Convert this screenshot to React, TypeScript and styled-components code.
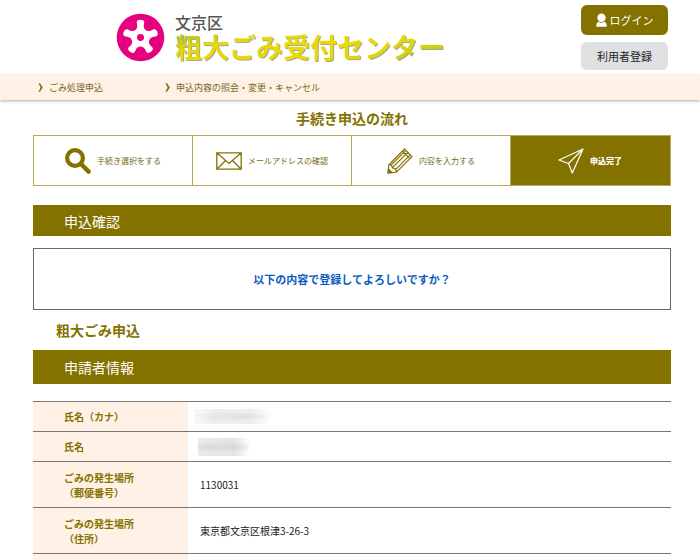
import React from "react";
import styled, { createGlobalStyle, css } from "styled-components";

const olive = "#847200";
const cream = "#fff1e5";

const Global = createGlobalStyle`
  * { box-sizing: border-box; }
  body {
    margin: 0;
    background: #fff;
    color: #222;
    font-family: "Noto Sans CJK JP", "Noto Sans", sans-serif;
    font-size: 10px;
    overflow-x: hidden;
  }
  h1, h2, h3, p, ol { margin: 0; padding: 0; }
`;

const Header = styled.header`
  display: flex;
  justify-content: space-between;
  padding: 5px 32px 5px 116px;
`;

const Brand = styled.a`
  display: flex;
  align-items: center;
  gap: 10px;
  text-decoration: none;
`;

const BrandText = styled.h1`
  display: flex;
  flex-direction: column;
  padding-bottom: 2px;
  color: #555;
`;

const Ward = styled.span`
  font-size: 16px;
  font-weight: 500;
  line-height: 20px;
`;

const CenterName = styled.span`
  font-size: 27px;
  font-weight: 700;
  line-height: 30px;
  white-space: nowrap;
  color: transparent;
  background: linear-gradient(165deg, #a3c41c 0, #e2d70e 20%, #ecd905 55%, #ddd60c 75%, #a9c31a);
  background-clip: text;
  filter: drop-shadow(1px 1px 0 #aaa690);
`;

const Account = styled.div`
  display: flex;
  flex-direction: column;
  gap: 7px;
`;

const AccountButton = styled.button<{ $primary?: boolean }>`
  display: flex;
  align-items: center;
  justify-content: center;
  gap: 3px;
  width: 87px;
  height: ${(p) => (p.$primary ? 30 : 28)}px;
  padding: 0;
  border: 0;
  border-radius: 6px;
  background: ${(p) => (p.$primary ? olive : "#dfe0e2")};
  color: ${(p) => (p.$primary ? "#fff" : "#222")};
  font: inherit;
  font-size: 11px;
`;

const Nav = styled.nav`
  display: flex;
  align-items: center;
  gap: 62px;
  height: 25px;
  padding: 0 38px;
  background: ${cream};
  box-shadow: 0 1px 3px #aaa;
`;

const NavLink = styled.a`
  display: flex;
  align-items: center;
  gap: 6px;
  color: #75681a;
  font-size: 9px;
  line-height: 12px;
  text-decoration: none;
`;

const Main = styled.main`
  padding: 8px 29px 0 33px;
`;

const FlowTitle = styled.h2`
  color: ${olive};
  font-size: 14px;
  line-height: 20px;
  text-align: center;
`;

const Steps = styled.ol`
  display: grid;
  grid-template-columns: repeat(4, 1fr);
  height: 51px;
  margin-top: 7px;
  border: 1px solid #b9ab55;
  list-style: none;
`;

const Step = styled.li<{ $current?: boolean }>`
  display: flex;
  align-items: center;
  justify-content: center;
  gap: 6px;
  border-right: 1px solid ${(p) => (p.$current ? olive : "#b9ab55")};
  color: #75681a;
  font-size: 8px;
  ${(p) =>
    p.$current &&
    css`
      background: ${olive};
      color: #fff;
      font-weight: 900;
    `}
`;

const Bar = styled.h2<{ $tall?: boolean }>`
  display: flex;
  align-items: center;
  height: ${(p) => (p.$tall ? 34 : 31)}px;
  padding-left: 31px;
  background: ${olive};
  color: #fff;
  font-size: 14px;
  font-weight: 400;
`;

const Confirm = styled.p`
  margin-top: 12px;
  padding: 22px 0;
  border: 1px solid #666;
  color: #0b5cc2;
  font-size: 11px;
  font-weight: 700;
  line-height: 16px;
  text-align: center;
`;

const Section = styled.section`
  margin-top: 19px;
`;

const FormName = styled.h2`
  margin: 10px 0;
  padding-left: 23px;
  color: ${olive};
  font-size: 14px;
  line-height: 20px;
`;

const Info = styled.table`
  width: 100%;
  margin-top: 17px;
  border-collapse: collapse;
  line-height: 15px;
`;

const Row = styled.tr<{ $tall?: boolean }>`
  height: ${(p) => (p.$tall ? 46 : 30)}px;
  border-top: 1px solid #777;
`;

const Label = styled.th`
  width: 155px;
  padding: 0 0 0 31px;
  background: ${cream};
  color: ${olive};
  font-weight: 700;
  text-align: left;
`;

const Value = styled.td`
  padding: 0 12px;
`;

const Redacted = styled.span<{ $long?: boolean }>`
  display: block;
  width: ${(p) => (p.$long ? 78 : 52)}px;
  height: ${(p) => (p.$long ? 15 : 18)}px;
  margin-left: ${(p) => (p.$long ? -6 : -2)}px;
  background: ${(p) =>
    p.$long
      ? "radial-gradient(ellipse at 38% 50%, #e1e2e2 0, transparent 45%), radial-gradient(ellipse at 64% 50%, #dfe0e0 0, transparent 40%), linear-gradient(90deg, #f8f8f8, #eee 25%, #eee 75%, #fff)"
      : "radial-gradient(ellipse at 25% 50%, #d8d9d9 0, transparent 45%), radial-gradient(ellipse at 66% 50%, #d7d8d8 0, transparent 40%), linear-gradient(90deg, #ebebeb, #e4e4e4 70%, #fff)"};
`;

const Emblem = () => (
  <svg width="49" height="49" viewBox="0 0 48 48" aria-hidden="true">
    <circle cx="24" cy="24" r="23.3" fill="#e5007f" />
    <g fill="#fff">
      {[0, 72, 144, 216, 288].map((a) => (
        <path
          key={a}
          transform={`rotate(${a} 24 24)`}
          d="M17 24L18.2 17.5Q21 15.5 20.8 12L20.3 9.4Q20.3 6.6 24 6.6Q27.7 6.6 27.7 9.4L27.2 12Q27 15.5 29.8 17.5L31 24Z"
        />
      ))}
    </g>
    <circle cx="24" cy="24" r="3.4" fill="#e5007f" />
  </svg>
);

const Person = () => (
  <svg width="11" height="14" viewBox="0 0 11 14" fill="#fff" aria-hidden="true">
    <circle cx="5.5" cy="4.7" r="4.2" />
    <path d="M.3 13.8V12Q.3 9.5 2.6 8.7Q5.5 10.6 8.4 8.7Q10.7 9.5 10.7 12V13.8Z" />
  </svg>
);

const Chevron = () => (
  <svg width="5" height="9" viewBox="0 0 5 9" fill={olive} aria-hidden="true">
    <path d="M.5 .3H2L4.8 4.5L2 8.7H.5L2.6 4.5Z" />
  </svg>
);

const Magnifier = () => (
  <svg width="26" height="26" viewBox="0 0 26 26" fill="none" stroke={olive} aria-hidden="true">
    <circle cx="10" cy="10" r="7.9" strokeWidth="4.2" />
    <path d="M16 16L23.6 23.6" strokeWidth="4.4" strokeLinecap="round" />
  </svg>
);

const Envelope = () => (
  <svg width="26" height="18" viewBox="0 0 26 18" fill="none" stroke={olive} strokeWidth="1.3" aria-hidden="true">
    <path d="M.8 .8H25.2V17.2H.8ZM1 1L13 11.5L25 1M1 17L9.6 8.5M25 17L16.4 8.5" />
  </svg>
);

const Pencil = () => (
  <svg width="26" height="26" viewBox="0 0 26 26" fill="none" stroke={olive} strokeWidth="1.2" strokeLinejoin="round" aria-hidden="true">
    <path d="M1 25L1.8 17L17.5 1L25 8.7L9.5 24.2ZM1.8 17Q5 16.2 5.3 19.8Q9.6 20 9.5 24.2M5.3 19.8L20.6 4.3M3.8 17.3L18.3 2.8M8.3 21.8L23.3 6.8M15.5 3.2L22.8 10.7" />
    <path d="M1 25L1.5 21L5 24.6Z" fill={olive} />
  </svg>
);

const Plane = () => (
  <svg width="26" height="26" viewBox="0 0 26 26" fill="none" stroke="#fff" strokeWidth="1.2" strokeLinejoin="round" aria-hidden="true">
    <path d="M25 1L1 12L10.5 15.5L14.3 25ZM25 1L10.5 15.5" />
  </svg>
);

const steps = [
  { icon: <Magnifier />, text: "手続き選択をする" },
  { icon: <Envelope />, text: "メールアドレスの確認" },
  { icon: <Pencil />, text: "内容を入力する" },
  { icon: <Plane />, text: "申込完了", current: true },
];

export default function App() {
  return (
    <>
      <Global />
      <Header>
        <Brand href="#">
          <Emblem />
          <BrandText>
            <Ward>文京区</Ward>
            <CenterName>粗大ごみ受付センター</CenterName>
          </BrandText>
        </Brand>
        <Account>
          <AccountButton $primary>
            <Person />
            ログイン
          </AccountButton>
          <AccountButton>利用者登録</AccountButton>
        </Account>
      </Header>
      <Nav>
        <NavLink href="#"><Chevron />ごみ処理申込</NavLink>
        <NavLink href="#"><Chevron />申込内容の照会・変更・キャンセル</NavLink>
      </Nav>
      <Main>
        <FlowTitle>手続き申込の流れ</FlowTitle>
        <Steps>
          {steps.map((s) => (
            <Step key={s.text} $current={s.current} aria-current={s.current ? "step" : undefined}>
              {s.icon}
              {s.text}
            </Step>
          ))}
        </Steps>
        <Section>
          <Bar>申込確認</Bar>
          <Confirm>以下の内容で登録してよろしいですか？</Confirm>
        </Section>
        <FormName>粗大ごみ申込</FormName>
        <Bar $tall>申請者情報</Bar>
        <Info>
          <tbody>
            <Row>
              <Label scope="row">氏名（カナ）</Label>
              <Value><Redacted $long /></Value>
            </Row>
            <Row>
              <Label scope="row">氏名</Label>
              <Value><Redacted /></Value>
            </Row>
            <Row $tall>
              <Label scope="row">ごみの発生場所<br />（郵便番号）</Label>
              <Value>1130031</Value>
            </Row>
            <Row $tall>
              <Label scope="row">ごみの発生場所<br />（住所）</Label>
              <Value>東京都文京区根津3-26-3</Value>
            </Row>
            <Row>
              <Label scope="row" />
              <Value />
            </Row>
          </tbody>
        </Info>
      </Main>
    </>
  );
}
